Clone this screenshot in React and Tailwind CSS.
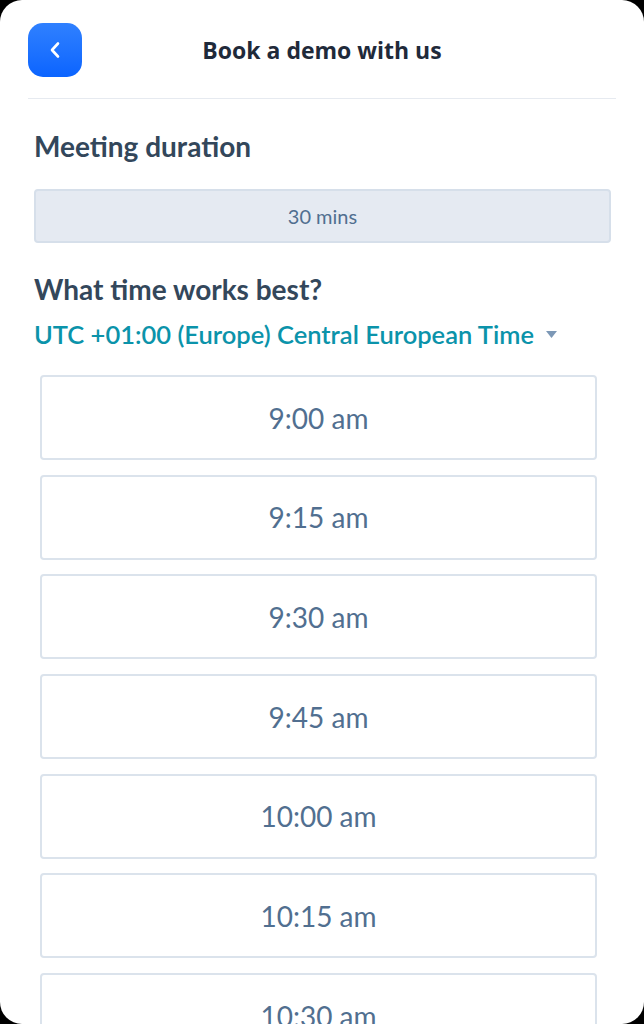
export default function App() {
  const slots = ['9:00 am', '9:15 am', '9:30 am', '9:45 am', '10:00 am', '10:15 am', '10:30 am']
  return (
    <div className="h-[1024px] w-[644px] overflow-hidden bg-black">
      <div className="h-full overflow-hidden rounded-[22px] bg-white" style={{ fontFamily: 'Lato, "Noto Sans", sans-serif' }}>
        <header className="relative mx-[28px] flex h-[99px] items-center border-b border-[#e6eaf0]">
          <button
            type="button"
            className="absolute left-0 top-[23px] flex h-[54px] w-[54px] items-center justify-center rounded-[15px] bg-gradient-to-b from-[#2f80ff] to-[#0a64ff]"
          >
            <svg width="12" height="18" viewBox="0 0 12 18" fill="none">
              <path d="M9 2.5 3 9l6 6.5" stroke="white" strokeWidth="2.6" strokeLinecap="round" strokeLinejoin="round" />
            </svg>
          </button>
          <h1
            className="w-full pt-[2px] text-center text-[23px] font-bold text-[#1f2a3a]"
            style={{ fontFamily: '"Open Sans", "Noto Sans", sans-serif' }}
          >
            Book a demo with us
          </h1>
        </header>

        <section className="px-[34px] pt-[30px]">
          <h2 className="text-[28px] font-bold leading-[34px] text-[#33475b]">Meeting duration</h2>
          <div className="mt-[26px] flex h-[54px] w-[577px] items-center justify-center rounded-[4px] border-2 border-[#d6dfea] bg-[#e5eaf2] text-[20px] text-[#516f90]">
            30 mins
          </div>
          <h2 className="mt-[29px] text-[28px] font-bold leading-[34px] text-[#33475b]">What time works best?</h2>
          <div className="mt-[13px] flex items-center gap-[12px] text-[25.5px] font-semibold leading-[30px] text-[#0b93aa]">
            <span>UTC +01:00 (Europe) Central European Time</span>
            <svg width="11" height="7" viewBox="0 0 11 7">
              <path d="M0 0h11L5.5 7z" fill="#7c98b6" />
            </svg>
          </div>
        </section>

        <ul className="mt-[26px] flex flex-col gap-[14.7px] pl-[40px] pr-[47px]">
          {slots.map((s) => (
            <li
              key={s}
              className="flex h-[85px] items-center justify-center rounded-[4px] border-2 border-[#dbe3ec] bg-white text-[28px] text-[#516f90]"
            >
              {s}
            </li>
          ))}
        </ul>
      </div>
    </div>
  )
}
